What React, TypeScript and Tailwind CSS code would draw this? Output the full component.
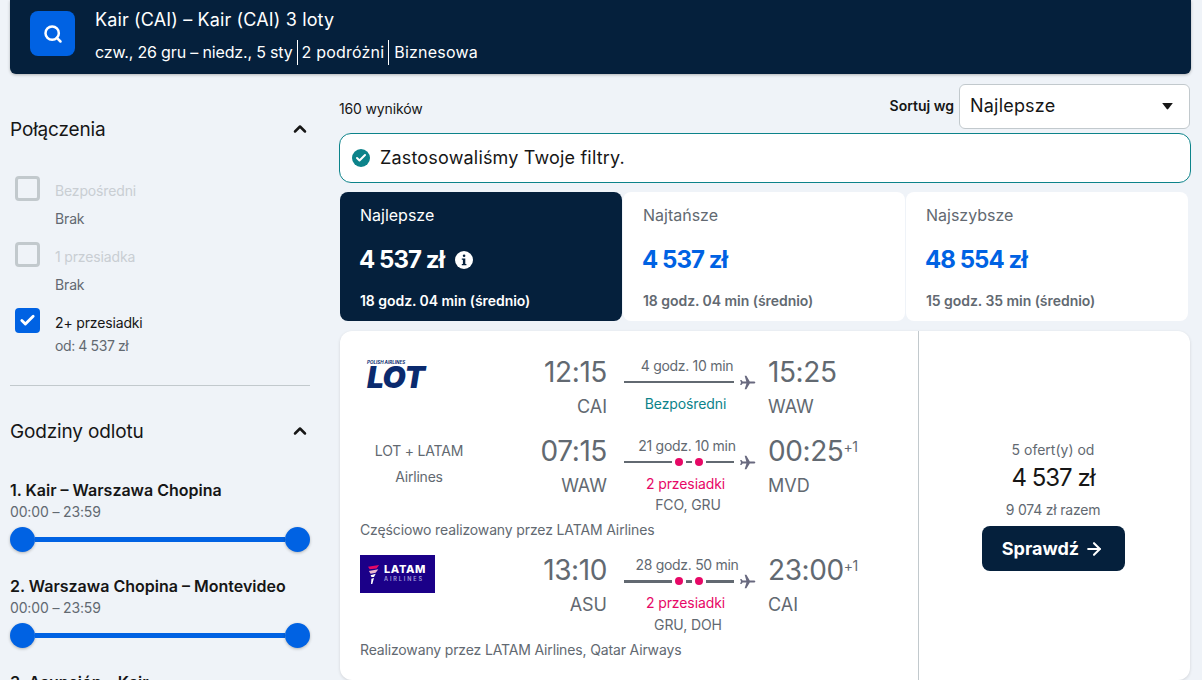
import React from "react";
import { Search, ChevronUp, Check, ArrowRight } from "lucide-react";

function Plane() {
  return (
    <svg viewBox="0 0 24 24" className="w-[17px] h-[17px] shrink-0 fill-[#68697f]">
      <path d="M23 12c0-.8-1-1.400-2.200-1.400h-5.600L10.400 2.500H8l2.300 8.100H5.200L3.400 8.400H1.600L2.800 12l-1.200 3.600h1.800l1.800-2.200h5.300L8 21.500h2.400l4.800-8.100h5.600C22 13.400 23 12.800 23 12z" />
    </svg>
  );
}

function FlightLine({ stops, thick }: { stops: boolean; thick?: boolean }) {
  const h = thick ? "h-[3px]" : "h-[2px]";
  return (
    <div className="flex items-center h-[16px]">
      <div className="w-[112px] flex items-center mr-[5px]">
        {stops ? (
          <>
            <div className={`w-[48px] ${h} bg-[#626971]`} />
            <div className="w-[8px] h-[8px] rounded-full bg-[#e70866] ml-[3px] mr-[3px]" />
            <div className={`w-[6px] ${h} bg-[#626971]`} />
            <div className="w-[8px] h-[8px] rounded-full bg-[#e70866] ml-[3px] mr-[3px]" />
            <div className={`flex-1 ${h} bg-[#626971]`} />
          </>
        ) : (
          <div className={`w-full ${h} bg-[#626971]`} />
        )}
      </div>
      <Plane />
    </div>
  );
}

function Leg({
  logo, dep, depCode, arr, arrCode, plus, dur, stopText, stopColor, via, stops, thick, height, midTop,
}: {
  logo: React.ReactNode; dep: string; depCode: string; arr: string; arrCode: string; plus?: boolean;
  dur: string; stopText: string; stopColor: string; via?: string; stops: boolean; thick?: boolean; height: string; midTop: string;
}) {
  return (
    <div className={`flex ${height}`}>
      <div className="w-[118px] shrink-0">{logo}</div>
      <div className="w-[129px] shrink-0 text-right">
        <div className="text-[28px] leading-[36px] text-[#626971] tracking-[-0.4px]">{dep}</div>
        <div className="text-[18px] leading-[24px] mt-[5px] text-[#626971]">{depCode}</div>
      </div>
      <div className={`w-[132px] shrink-0 ml-[17px] ${midTop}`}>
        <div className="w-[126px] text-center text-[14px] leading-[20px] text-[#626971] whitespace-nowrap tracking-[-0.3px]">{dur}</div>
        <div className="mt-[-2px]"><FlightLine stops={stops} thick={thick} /></div>
        <div className={`w-[123px] text-center text-[14px] leading-[20px] mt-[4px] whitespace-nowrap tracking-[-0.1px] ${stopColor}`}>{stopText}</div>
        {via && <div className={`w-[128px] text-center text-[14px] leading-[20px] text-[#626971] tracking-[-0.1px] ${thick ? "mt-[2px]" : "mt-[1px]"}`}>{via}</div>}
      </div>
      <div className="ml-[12px]">
        <div className="flex items-start">
          <span className="text-[28px] leading-[36px] text-[#626971] tracking-[-0.4px]">{arr}</span>
          {plus && <span className="text-[14px] leading-[20px] text-[#626971] mt-[4px] tracking-[-0.5px]">+1</span>}
        </div>
        <div className="text-[18px] leading-[24px] mt-[5px] text-[#626971]">{arrCode}</div>
      </div>
    </div>
  );
}

function CheckRow({ label, sub, checked }: { label: string; sub: string; checked?: boolean }) {
  return (
    <div className="flex">
      {checked ? (
        <div className="w-[25px] h-[25px] rounded-[4px] bg-[#0062e3] flex items-center justify-center shrink-0">
          <Check size={17} strokeWidth={4} className="text-white" />
        </div>
      ) : (
        <div className="w-[25px] h-[25px] rounded-[4px] border-[3px] border-[#c2c9cd] shrink-0" />
      )}
      <div className="ml-[15px] tracking-[-0.15px]">
        <div className={`text-[14px] leading-[20px] mt-[5px] ${checked ? "text-[#161616]" : "text-[#c9ced3]"}`}>{label}</div>
        <div className={`text-[14px] leading-[20px] text-[#626971] ${checked ? "mt-[3px] tracking-[-0.4px]" : "mt-[8px]"}`}>{sub}</div>
      </div>
    </div>
  );
}

function SliderBlock({ title }: { title: string }) {
  return (
    <div>
      <div className="text-[16px] leading-[24px] font-semibold text-[#161616] whitespace-nowrap">{title}</div>
      <div className="text-[14px] leading-[20px] text-[#626971] tracking-[-0.15px]">00:00 – 23:59</div>
      <div className="flex items-center mt-[5px] h-[25px]">
        <div className="w-[25px] h-[25px] rounded-full bg-[#0062e3] shadow-[0_1px_3px_rgba(37,32,31,0.3)] shrink-0" />
        <div className="flex-1 h-[5px] bg-[#0062e3]" />
        <div className="w-[25px] h-[25px] rounded-full bg-[#0062e3] shadow-[0_1px_3px_rgba(37,32,31,0.3)] shrink-0" />
      </div>
    </div>
  );
}

function Tab({ label, price, sub, active, info, width }: { label: string; price: string; sub: string; active?: boolean; info?: boolean; width: string }) {
  return (
    <div className={`${width} h-[129px] rounded-[8px] pl-[20px] pt-[11px] ${active ? "bg-[#05203c] text-white" : "bg-white"}`}>
      <div className={`text-[16px] leading-[24px] ${active ? "text-white" : "text-[#626971]"}`}>{label}</div>
      <div className={`flex items-center mt-[19px] ml-[-1px] text-[24px] leading-[28px] font-bold tracking-[-0.95px] ${active ? "text-white" : "text-[#0062e3]"}`}>
        <span>{price}</span>
        {info && (
          <span className="ml-[11px] w-[18px] h-[18px] rounded-full bg-white flex items-center justify-center">
            <svg viewBox="0 0 18 18" className="w-[18px] h-[18px] fill-[#05203c]">
              <rect x="7.800" y="3.400" width="2.600" height="2.600" rx="1.300" />
              <path d="M6.800 7.400h3.500v5.500h1.100v1.400H6.800v-1.400h1.100V8.800H6.800z" />
            </svg>
          </span>
        )}
      </div>
      <div className={`text-[14px] leading-[20px] font-semibold mt-[17px] tracking-[-0.05px] ${active ? "text-white" : "text-[#626971]"}`}>{sub}</div>
    </div>
  );
}

function LotLogo() {
  return (
    <div className="ml-[7px] mt-[6px] w-[61px] text-[#0a2a6e]">
      <div className="text-[4.500px] leading-[5px] font-bold italic whitespace-nowrap">POLISH AIRLINES</div>
      <div className="text-[30px] leading-[24px] h-[24px] font-black italic whitespace-nowrap tracking-[-0.5px]">LOT</div>
    </div>
  );
}

function LatamLogo() {
  return (
    <div className="mt-[3px] w-[75px] h-[38px] bg-[#1b0088] flex items-center pl-[8px]">
      <svg viewBox="0 0 14 24" className="w-[12px] h-[21px] shrink-0">
        <path d="M0 3 L13 1 L10 5 L2 6z" fill="#e70866" />
        <path d="M1 8 L12 6 L9 10 L3 11z" fill="#e8b5cf" />
        <path d="M3 13 L9 11 L7 15 L4 15z" fill="#ffffff" />
        <path d="M4 17 L7 16 L5 23 L3.500 23z" fill="#ffffff" />
      </svg>
      <div className="ml-[4px]">
        <div className="text-[11px] leading-[11px] font-extrabold text-white tracking-[0.6px]">LATAM</div>
        <div className="text-[5.500px] leading-[9px] font-semibold text-[#a9a0dc] tracking-[1.900px] whitespace-nowrap">AIRLINES</div>
      </div>
    </div>
  );
}

export default function App() {
  return (
    <div className="w-[1202px] h-[680px] overflow-hidden bg-[#eff3f8] font-['Inter',sans-serif] text-[#161616]">
      <header className="mx-[10px] w-[1181px] h-[74px] bg-[#05203c] rounded-b-[6px] shadow-[0_1px_3px_rgba(37,32,31,0.3)] flex items-start pl-[20px] pt-[11px]">
        <div className="w-[45px] h-[45px] rounded-[8px] bg-[#0062e3] flex items-center justify-center">
          <Search size={20} strokeWidth={3} className="text-white" />
        </div>
        <div className="ml-[20px] text-white mt-[-3px]">
          <div className="text-[18px] leading-[24px] tracking-[0.14px]">Kair (CAI) – Kair (CAI) 3 loty</div>
          <div className="flex items-center mt-[7px] text-[16px] leading-[24px] h-[26px]">
            <span className="tracking-[-0.16px]">czw., 26 gru – niedz., 5 sty</span>
            <span className="w-px h-[25px] bg-white mx-[4px]" />
            <span className="tracking-[0.2px]">2 podróżni</span>
            <span className="w-px h-[25px] bg-white ml-[4px] mr-[5px]" />
            <span className="tracking-[0.2px]">Biznesowa</span>
          </div>
        </div>
      </header>

      <div className="flex mt-[10px] ml-[10px]">
        <aside className="w-[300px] shrink-0">
          <div className="flex items-center justify-between h-[28px] mt-[31px]">
            <div className="text-[19px] leading-[28px] tracking-[-0.15px] mt-[1px]">Połączenia</div>
            <ChevronUp size={20} strokeWidth={3} className="text-[#161616]" />
          </div>
          <div className="ml-[5px] mt-[33px] flex flex-col gap-[8px]">
            <div className="h-[58px]"><CheckRow label="Bezpośredni" sub="Brak" /></div>
            <div className="h-[58px]"><CheckRow label="1 przesiadka" sub="Brak" /></div>
            <div><CheckRow label="2+ przesiadki" sub="od: 4 537 zł" checked /></div>
          </div>
          <div className="h-px bg-[#c2c9cd] mt-[29px]" />
          <div className="flex items-center justify-between h-[28px] mt-[31px]">
            <div className="text-[19px] leading-[28px] tracking-[-0.15px] mt-[1px]">Godziny odlotu</div>
            <ChevronUp size={20} strokeWidth={3} className="text-[#161616]" />
          </div>
          <div className="mt-[33px] flex flex-col gap-[22px]">
            <SliderBlock title="1. Kair – Warszawa Chopina" />
            <SliderBlock title="2. Warszawa Chopina – Montevideo" />
            <SliderBlock title="3. Asunción – Kair" />
          </div>
        </aside>

        <main className="ml-[29px] w-[852px] shrink-0">
          <div className="flex items-center justify-between h-[45px]">
            <div className="text-[14px] leading-[20px] mt-[5px] tracking-[-0.15px]">160 wyników</div>
            <div className="flex items-center mr-[1px]">
              <span className="text-[14px] leading-[20px] font-semibold mr-[5px] mt-[-2px]">Sortuj wg</span>
              <div className="w-[231px] h-[45px] bg-white border border-[#c2c9cd] rounded-[6px] flex items-center justify-between pl-[10px] pr-[15px]">
                <span className="text-[18px] leading-[24px] mt-[-2px] tracking-[0.2px]">Najlepsze</span>
                <svg viewBox="0 0 14 9" className="w-[13px] h-[8px] fill-[#161616] mt-[-1px]"><path d="M1 1h12L7.800 8Q7 8.800 6.200 8z" /></svg>
              </div>
            </div>
          </div>
          <div className="mt-[4px] h-[50px] bg-white border border-[#0c838a] rounded-[12px] flex items-center pl-[12px]">
            <div className="w-[18px] h-[18px] rounded-full bg-[#0c838a] flex items-center justify-center">
              <Check size={12} strokeWidth={4} className="text-white" />
            </div>
            <span className="ml-[10px] text-[18px] leading-[24px] tracking-[0.18px]">Zastosowaliśmy Twoje filtry.</span>
          </div>
          <div className="flex mt-[9px] ml-[1px] gap-[1px]">
            <Tab active width="w-[282px]" label="Najlepsze" price="4 537 zł" sub="18 godz. 04 min (średnio)" info />
            <Tab width="w-[282px]" label="Najtańsze" price="4 537 zł" sub="18 godz. 04 min (średnio)" />
            <Tab width="w-[282px]" label="Najszybsze" price="48 554 zł" sub="15 godz. 35 min (średnio)" />
          </div>
          <div className="mt-[10px] ml-[1px] w-[850px] h-[349px] bg-white rounded-[12px] flex shadow-[0_1px_3px_rgba(37,32,31,0.15)]">
            <div className="w-[579px] h-full border-r border-[#c2c9cd] pl-[20px] pt-[23px] shrink-0">
              <Leg
                height="h-[79px]"
                midTop="pt-[2px]"
                logo={<LotLogo />}
                dep="12:15" depCode="CAI" arr="15:25" arrCode="WAW"
                dur="4 godz. 10 min" stopText="Bezpośredni" stopColor="text-[#0c838a]" stops={false}
              />
              <Leg
                height="h-[87px]"
                midTop="pt-[3px]"
                logo={
                  <div className="text-center w-[118px] text-[14px] leading-[26px] text-[#626971] tracking-[-0.2px]">
                    <div className="mt-[5px]">LOT + LATAM</div>
                    <div>Airlines</div>
                  </div>
                }
                dep="07:15" depCode="WAW" arr="00:25" arrCode="MVD" plus
                dur="21 godz. 10 min" stopText="2 przesiadki" stopColor="text-[#e70866]" via="FCO, GRU" stops
              />
              <div className="text-[14px] leading-[20px] text-[#626971] tracking-[-0.13px]">Częściowo realizowany przez LATAM Airlines</div>
              <div className="mt-[12px]">
                <Leg
                  height="h-[88px]"
                  midTop="pt-[3px]"
                  logo={<LatamLogo />}
                  dep="13:10" depCode="ASU" arr="23:00" arrCode="CAI" plus
                  dur="28 godz. 50 min" stopText="2 przesiadki" stopColor="text-[#e70866]" via="GRU, DOH" stops thick
                />
              </div>
              <div className="text-[14px] leading-[20px] text-[#626971] tracking-[-0.15px]">Realizowany przez LATAM Airlines, Qatar Airways</div>
            </div>
            <div className="flex-1 flex flex-col items-center pt-[109px] pr-[3px]">
              <div className="text-[14px] leading-[20px] text-[#626971]">5 ofert(y) od</div>
              <div className="text-[24px] leading-[28px] mt-[4px] text-[#161616] tracking-[-1px]">4 537 zł</div>
              <div className="text-[14px] leading-[20px] text-[#626971] mt-[8px] tracking-[-0.2px]">9 074 zł razem</div>
              <div className="mt-[6px] w-[143px] h-[45px] rounded-[8px] bg-[#05203c] text-white flex items-center justify-center gap-[5px]">
                <span className="text-[18px] font-bold leading-[24px]">Sprawdź</span>
                <ArrowRight size={20} strokeWidth={2.500} />
              </div>
            </div>
          </div>
        </main>
      </div>
    </div>
  );
}
